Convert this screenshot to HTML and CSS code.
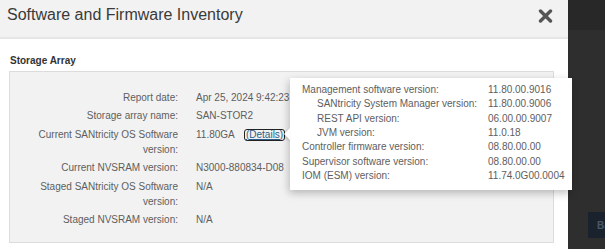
FILE: index.html
```html
<!DOCTYPE html>
<html lang="en">
<head>
    <meta charset="UTF-8">
    <title>Software and Firmware Inventory</title>
    <link rel="stylesheet" href="styles.css">
</head>
<body>
    <div class="modal">
        <div class="modal-header">
            <h1 class="modal-title">Software and Firmware Inventory</h1>
            <button class="close" aria-label="Close">
                <svg width="15" height="14" viewBox="0 0 15 14">
                    <path d="M2.5 2 L12.5 12 M12.5 2 L2.5 12" stroke="#555" stroke-width="3.4" stroke-linecap="round" fill="none"/>
                </svg>
            </button>
        </div>
        <div class="modal-body">
            <h2 class="section-title">Storage Array</h2>
            <div class="panel">
                <dl class="inventory">
                    <dt>Report date:</dt>
                    <dd>Apr 25, 2024 9:42:23 AM</dd>
                    <dt>Storage array name:</dt>
                    <dd>SAN-STOR2</dd>
                    <dt>Current SANtricity OS Software version:</dt>
                    <dd>11.80GA <a class="details" href="#">(Details)</a></dd>
                    <dt>Current NVSRAM version:</dt>
                    <dd>N3000-880834-D08</dd>
                    <dt>Staged SANtricity OS Software version:</dt>
                    <dd>N/A</dd>
                    <dt>Staged NVSRAM version:</dt>
                    <dd>N/A</dd>
                </dl>

                <!-- details popover for the current OS version -->
                <div class="popover">
                    <span>Management software version:</span><span>11.80.00.9016</span>
                    <span class="sub">SANtricity System Manager version:</span><span>11.80.00.9006</span>
                    <span class="sub">REST API version:</span><span>06.00.00.9007</span>
                    <span class="sub">JVM version:</span><span>11.0.18</span>
                    <span>Controller firmware version:</span><span>08.80.00.00</span>
                    <span>Supervisor software version:</span><span>08.80.00.00</span>
                    <span>IOM (ESM) version:</span><span>11.74.0G00.0004</span>
                </div>
            </div>
        </div>
    </div>

    <div class="backdrop">
        <div class="backdrop-bar"></div>
        <button class="back-btn">Back</button>
    </div>
</body>
</html>
```

FILE: styles.css
```css
html, body {
    margin: 0;
    padding: 0;
    width: 100%;
    height: 100%;
    overflow: hidden;
    font-family: "Liberation Sans", Arial, sans-serif;
}

body {
    display: flex;
    background: #2e2e2e;
}

/* Modal */
.modal {
    flex: none;
    width: 568px;
    height: 100%;
    background: #fff;
}

.modal-header {
    display: flex;
    justify-content: space-between;
    align-items: flex-start;
    height: 39px;
    box-sizing: border-box;
    padding: 6px 15px 0 7px;
    background: #f2f2f2;
    border-bottom: 2px solid #e6e6e6;
}

.modal-title {
    margin: 0;
    font-size: 16px;
    font-weight: normal;
    line-height: 18px;
    color: #3a3a3a;
}

.close {
    margin-top: 3px;
    padding: 0;
    border: 0;
    background: none;
    width: 15px;
    height: 14px;
    line-height: 0;
    cursor: pointer;
}

.modal-body {
    padding: 14px 14px 0 9px;
}

.section-title {
    margin: 0 0 3px 1px;
    font-size: 10px;
    font-weight: bold;
    line-height: 15px;
    color: #333;
}

.panel {
    position: relative;
    background: #f2f2f2;
    border: 1px solid #dcdcdc;
    padding: 17.5px 0 15px;
}

.inventory {
    display: grid;
    grid-template-columns: 168px 1fr;
    column-gap: 18px;
    row-gap: 3.5px;
    margin: 0;
    font-size: 10px;
    line-height: 15px;
    color: #5e5e5e;
}

.inventory dt {
    text-align: right;
}

.inventory dd {
    margin: 0;
    white-space: nowrap;
}

.details {
    display: inline-block;
    margin-left: 7px;
    padding: 0 1px;
    line-height: 10px;
    border: 1px solid #222;
    border-radius: 3px;
    color: #2b5f8a;
    text-decoration: underline;
}

/* Popover */
.popover {
    position: absolute;
    left: 280px;
    top: 6px;
    width: 282px;
    box-sizing: border-box;
    padding: 5px 7px 7px 12px;
    display: grid;
    grid-template-columns: 186px auto;
    background: #fff;
    box-shadow: -1px 3px 8px rgba(0, 0, 0, 0.25);
    font-size: 10px;
    line-height: 14.33px;
    color: #5e5e5e;
    white-space: nowrap;
}

.popover::before {
    content: "";
    position: absolute;
    left: -6px;
    top: 50px;
    border-top: 6px solid transparent;
    border-bottom: 6px solid transparent;
    border-right: 6px solid #fff;
    filter: drop-shadow(-1px 1px 1px rgba(0, 0, 0, 0.2));
}

.popover .sub {
    padding-left: 15px;
}

/* Backdrop behind the modal */
.backdrop {
    flex: 1;
    display: flex;
    flex-direction: column;
    overflow: hidden;
}

.backdrop-bar {
    height: 30px;
    background: #282828;
}

.back-btn {
    margin: 182px 0 0 20px;
    width: 60px;
    height: 26px;
    padding: 0 0 0 9px;
    border: 0;
    background: #19222d;
    color: #4d5866;
    font-family: inherit;
    font-size: 10px;
    font-weight: bold;
    text-align: left;
}
```
